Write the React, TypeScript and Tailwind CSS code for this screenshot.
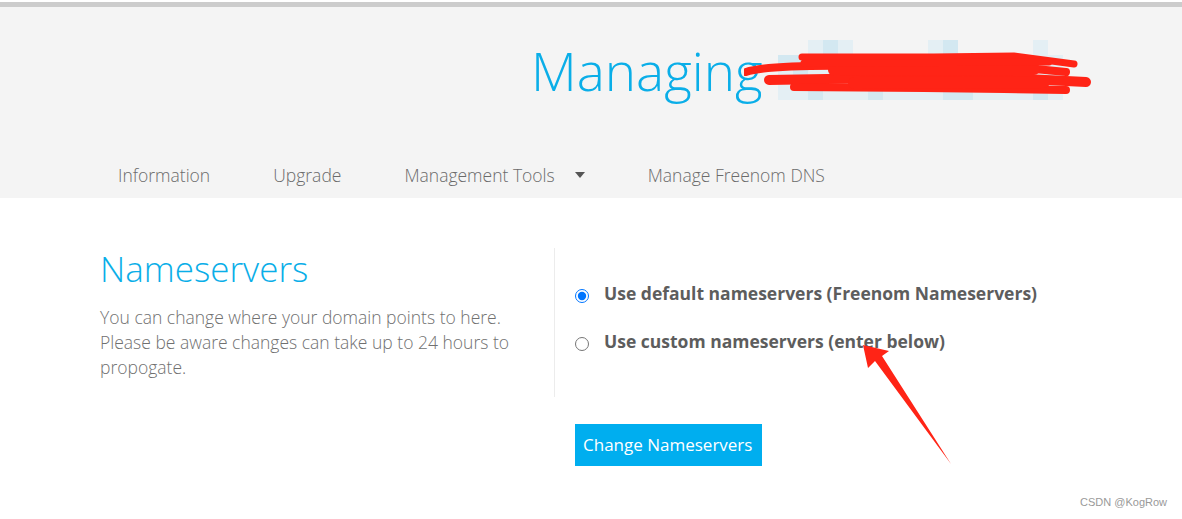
import { useState } from 'react';

const navItems = ['Information', 'Upgrade', 'Management Tools', 'Manage Freenom DNS'];

// pale cells of the pixelated domain name
const cells = [
  0, 0, 1, 2, 1, 0, 0, 0, 0, 0, 1, 2, 0, 0, 0, 0, 0, 1, 0,
  2, 2, 1, 1, 2, 1, 1, 1, 2, 1, 2, 1, 1, 2, 2, 1, 1, 1, 1,
  1, 2, 1, 1, 1, 2, 2, 1, 1, 2, 1, 1, 2, 2, 1, 1, 1, 1, 2,
  1, 1, 2, 1, 1, 1, 2, 1, 1, 1, 1, 2, 2, 1, 1, 1, 1, 2, 1,
];

export default function App() {
  const [mode, setMode] = useState<'default' | 'custom'>('default');

  return (
    <div className="relative w-[1182px] h-[519px] bg-white overflow-hidden font-['Open_Sans',sans-serif]">
      {/* header */}
      <div className="mt-[2px] h-[5px] bg-[#cccccc]" />
      <div className="bg-[#f4f4f4] h-[191px] flex flex-col">
        <div className="flex items-start pl-[531px] pt-[37px] h-[145px]">
          <h1 className="text-[53px] font-light text-[#0aaee8] leading-none">Managing</h1>
          <div className="relative w-[285px] h-[60px] ml-[15px] -mt-[4px]">
            <div className="grid grid-cols-[repeat(19,1fr)] grid-rows-[repeat(4,1fr)] w-full h-full">
              {cells.map((c, i) => (
                <div key={i} className={c === 0 ? '' : c === 1 ? 'bg-[#e4eff4]' : 'bg-[#d3e8f1]'} />
              ))}
            </div>
            {/* red scribble */}
            <svg className="absolute -left-[34px] top-[12px]" width="352" height="44" viewBox="0 0 352 44">
              <g stroke="#ff2416" strokeLinecap="round" fill="none">
                <path d="M58 5 L190 5 L270 4 L330 12" strokeWidth="7" />
                <path d="M2 20 C20 14 60 13 120 14 L250 13 L322 20" strokeWidth="8" />
                <path d="M25 28 L140 26 L240 25 L342 30" strokeWidth="10" />
                <path d="M50 35 L180 36 L260 37 L322 38" strokeWidth="8" />
                <path d="M90 18 L290 17" strokeWidth="12" />
                <path d="M110 31 L300 30" strokeWidth="12" />
                <path d="M60 11 L305 10" strokeWidth="7" />
              </g>
            </svg>
          </div>
        </div>
        <nav className="flex items-center h-[46px] pl-[118px] text-[17.5px] text-[#6b6b6b] font-light">
          {navItems.map((item, i) => (
            <a key={item} className={`flex items-center ${i < 3 ? 'mr-[63px]' : ''}`}>
              {item}
              {item === 'Management Tools' && (
                <svg className="ml-[20px]" width="10" height="6" viewBox="0 0 10 6">
                  <path d="M0 0 L10 0 L5 6 Z" fill="#555" />
                </svg>
              )}
            </a>
          ))}
        </nav>
      </div>

      {/* content */}
      <div className="flex pl-[100px] pt-[50px]">
        <div className="w-[455px] pr-[30px] border-r border-[#ececec] h-[149px]">
          <h2 className="text-[35px] font-light text-[#0aaee8] leading-none mt-[3px]">Nameservers</h2>
          <p className="mt-[19px] text-[17.5px] leading-[25px] font-light text-[#707070]">
            You can change where your domain points to here. Please be aware changes can take up to 24 hours to propogate.
          </p>
        </div>
        <div className="pl-[20px] pt-[33px]">
          <label className="flex items-center gap-[15px] cursor-pointer h-[25px]">
            <input
              type="radio"
              name="ns"
              checked={mode === 'default'}
              onChange={() => setMode('default')}
              className="w-[14px] h-[14px] m-0 mt-[4px] accent-[#0075ff]"
            />
            <span className="text-[17.5px] font-bold text-[#5d5d5d]">Use default nameservers (Freenom Nameservers)</span>
          </label>
          <label className="flex items-center gap-[15px] cursor-pointer h-[25px] mt-[23px]">
            <input
              type="radio"
              name="ns"
              checked={mode === 'custom'}
              onChange={() => setMode('custom')}
              className="w-[14px] h-[14px] m-0 mt-[4px]"
            />
            <span className="text-[17.5px] font-bold text-[#5d5d5d]">Use custom nameservers (enter below)</span>
          </label>
          <button className="mt-[70px] bg-[#00aeef] text-white text-[17px] px-[8px] h-[42px] w-[187px] text-left">
            Change Nameservers
          </button>
        </div>
      </div>

      {/* annotation arrow */}
      <svg className="absolute left-[855px] top-[340px] pointer-events-none" width="100" height="130" viewBox="0 0 100 130">
        <path d="M8 5 L34 11 L27 16 L96 124 L20 21 L13 28 Z" fill="#ff2416" />
      </svg>

      <div className="absolute right-[15px] bottom-[9px] text-[11px] text-[#999] font-['Liberation_Sans',sans-serif]">CSDN @KogRow</div>
    </div>
  );
}
